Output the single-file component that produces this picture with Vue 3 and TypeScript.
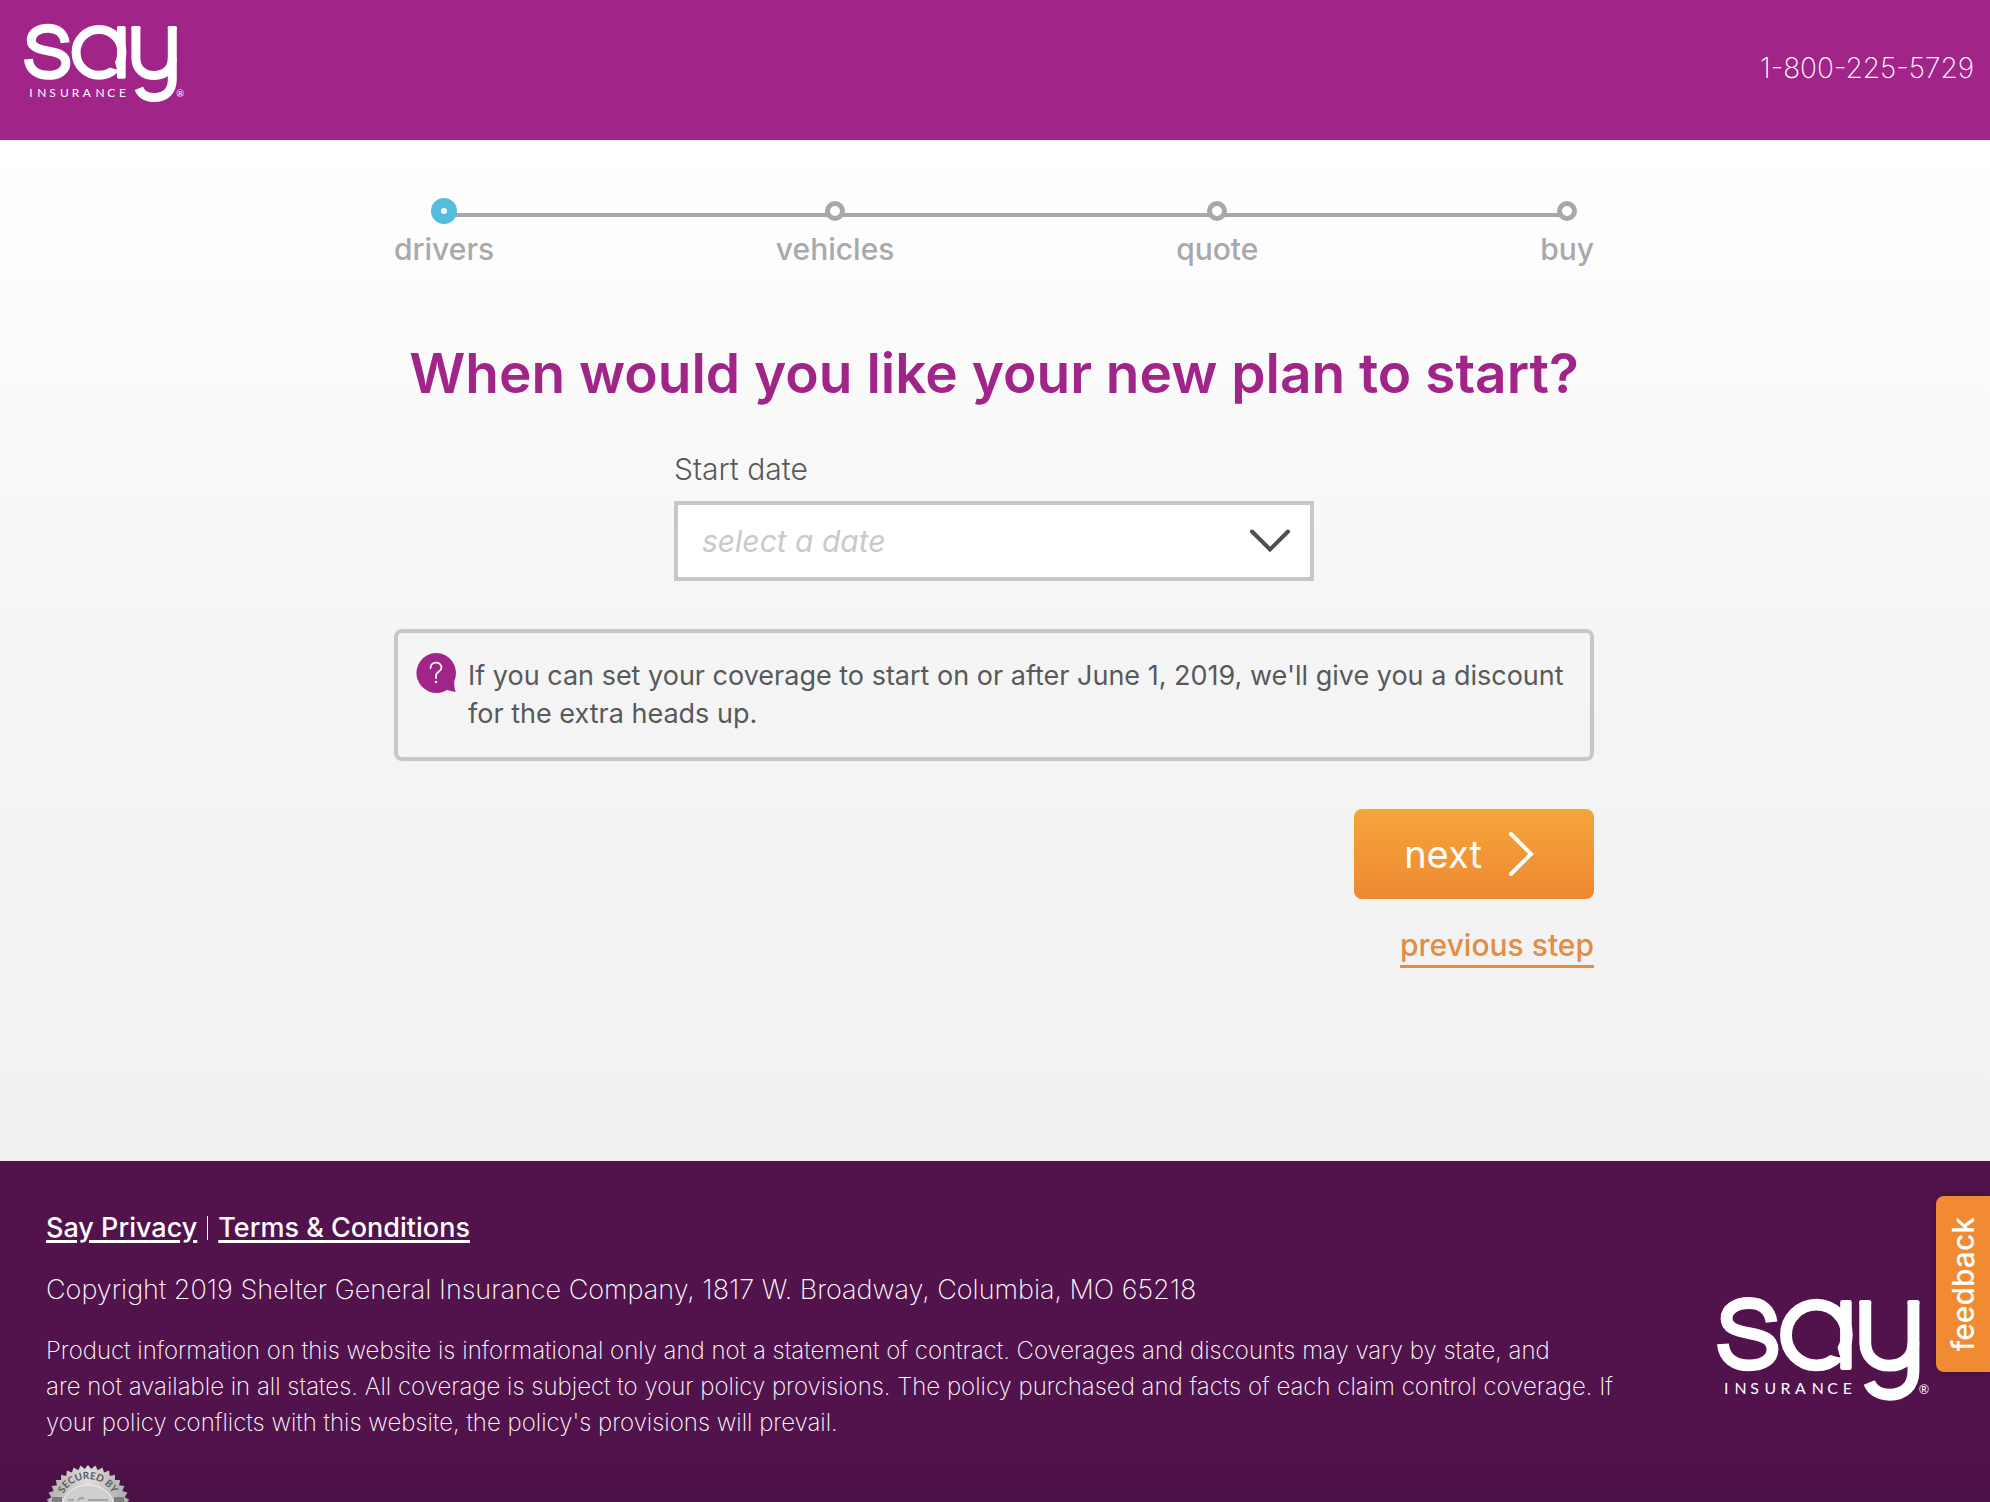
<script setup lang="ts">
import { defineComponent, h, ref } from 'vue'

const steps: string[] = ['drivers', 'vehicles', 'quote', 'buy']
const current = ref(0)
const startDate = ref('')

const insuranceX = '101 133 181 224 272 316 367 414 461'

const SayLogo = defineComponent({
  props: { ground: { type: String, required: true } },
  setup(props) {
    const stroke = { fill: 'none', stroke: '#fff', 'stroke-width': 36 }
    return () =>
      h('svg', { viewBox: '80 350 642 320', width: '100%', role: 'img', 'aria-label': 'Say Insurance', style: 'display:block' }, [
        h('path', {
          ...stroke,
          d: 'M245 429 C241 392 215 371 177 371 C138 371 109 390 109 418 C109 446 135 455 180 463 C225 471 248 483 248 512 C248 542 218 560 178 560 C134 560 101 538 98 495',
        }),
        h('circle', { ...stroke, cx: 381, cy: 468, r: 92 }),
        h('rect', { x: 453, y: 362, width: 35, height: 212, rx: 7, fill: '#fff' }),
        h('path', { d: 'M414 530 Q424 527 434 532 Q444 536 454 536 Q449 526 444 500 Z', fill: props.ground }),
        h('path', { ...stroke, d: 'M529 366 V490 C529 534 560 561 603 561 C645 561 675 534 675 490' }),
        h('path', { ...stroke, d: 'M675 366 V577 C675 624 645 649 603 649 C572 649 550 635 541 612' }),
        h('rect', { x: 511, y: 362, width: 36, height: 16, rx: 6, fill: '#fff' }),
        h('rect', { x: 657, y: 362, width: 36, height: 16, rx: 6, fill: '#fff' }),
        h('text', { x: insuranceX, y: 646, fill: '#fff', 'font-size': 48, 'font-family': 'Lato, sans-serif' }, 'INSURANCE'),
        h('text', { x: 691, y: 648, fill: '#fff', 'font-size': 38, 'font-family': 'Lato, sans-serif' }, '®'),
      ])
  },
})

const teeth = 36
const sealPoints = Array.from({ length: teeth * 2 }, (_, i) => {
  const r = i % 2 ? 38 : 42
  const a = (i * Math.PI) / teeth
  return `${(42 + r * Math.sin(a)).toFixed(1)},${(42 - r * Math.cos(a)).toFixed(1)}`
}).join(' ')
</script>

<template>
  <div class="page">
    <header class="topbar">
      <a href="#" class="logo"><SayLogo ground="#a12489" /></a>
      <a href="tel:18002255729" class="phone">1-800-225-5729</a>
    </header>

    <main class="main">
      <div class="content">
        <ol class="steps">
          <li v-for="(step, i) in steps" :key="step" class="step" :class="{ active: i === current }">
            <span class="dot-box"><span class="dot"></span></span>
            <span>{{ step }}</span>
          </li>
        </ol>

        <h1>When would you like your new plan to start?</h1>

        <div class="field">
          <label for="start-date">Start date</label>
          <div class="select-wrap">
            <select id="start-date" v-model="startDate">
              <option value="">select a date</option>
              <option value="2019-06-01">June 1, 2019</option>
            </select>
            <svg class="caret" width="42" height="24" viewBox="0 0 42 24" aria-hidden="true">
              <path d="M3 2.5 L21 20.500 L39 2.500" fill="none" stroke="#4d4e50" stroke-width="4" stroke-linecap="round" />
            </svg>
          </div>
        </div>

        <div class="tip">
          <svg width="40" height="40" viewBox="0 0 40 40" aria-hidden="true">
            <path d="M20 0 A20 20 0 0 1 38.500 27.500 Q37.500 31 39.500 39 Q34 38 31 37 A20 20 0 1 1 20 0 Z" fill="#a12489" />
            <path d="M14.500 15 C14.500 8 25.500 8 25.500 14.500 C25.500 19 20 18.500 20 22.500 V25" fill="none" stroke="#fff" stroke-width="1.800" stroke-linecap="round" />
            <circle cx="20" cy="29" r="1.300" fill="#fff" />
          </svg>
          <p>If you can set your coverage to start on or after June 1, 2019, we'll give you a discount for the extra heads up.</p>
        </div>

        <div class="actions">
          <button type="button" class="next">
            <span>next</span>
            <svg width="26" height="46" viewBox="0 0 26 46" aria-hidden="true">
              <path d="M3 3 L23 23 L3 43" fill="none" stroke="#fff" stroke-width="4" stroke-linecap="round" />
            </svg>
          </button>
          <a href="#" class="previous">previous step</a>
        </div>
      </div>
    </main>

    <footer class="footer">
      <div class="legal">
        <p class="links"><a href="#">Say Privacy</a><span class="bar"></span><a href="#">Terms &amp; Conditions</a></p>
        <p class="copyright">Copyright 2019 Shelter General Insurance Company, 1817 W. Broadway, Columbia, MO 65218</p>
        <p class="notice">
          Product information on this website is informational only and not a statement of contract. Coverages and discounts may vary by state, and<br />
          are not available in all states. All coverage is subject to your policy provisions. The policy purchased and facts of each claim control coverage. If<br />
          your policy conflicts with this website, the policy's provisions will prevail.
        </p>
        <div class="seal">
          <svg width="84" height="84" viewBox="0 0 84 84" role="img" aria-label="Secured by">
            <defs>
              <linearGradient id="metal" x1="0" x2="1" y1="0" y2="0">
                <stop offset="0" stop-color="#aeadaf" />
                <stop offset="0.5" stop-color="#dedede" />
                <stop offset="1" stop-color="#a9a8aa" />
              </linearGradient>
              <path id="arc" d="M14 42 A28 28 0 0 1 70 42" />
            </defs>
            <polygon :points="sealPoints" fill="url(#metal)" />
            <ellipse cx="42" cy="42" rx="26" ry="22" fill="#cfcfd0" stroke="#f2f2f2" stroke-width="1" />
            <rect x="6" y="32" width="10" height="16" fill="#7d7c7f" />
            <rect x="68" y="32" width="10" height="16" fill="#7d7c7f" />
            <path d="M22 35 H28 M32 36 Q34 31 38 34 M42 35 H62" fill="none" stroke="#a3a2a5" stroke-width="2" />
            <text font-size="10" font-weight="700" font-family="Lato, sans-serif" fill="#5b5a5d" text-anchor="middle">
              <textPath href="#arc" startOffset="50%">SECURED BY</textPath>
            </text>
          </svg>
        </div>
      </div>
      <div class="footer-logo"><SayLogo ground="#52134d" /></div>
    </footer>

    <button type="button" class="feedback">feedback</button>
  </div>
</template>

<style>
body {
  margin: 0;
}
</style>

<style scoped>
.page {
  position: relative;
  display: flex;
  flex-direction: column;
  min-height: 100vh;
  font-family: Inter, 'Liberation Sans', sans-serif;
  font-size: 30px;
  color: #58595b;
}
p,
h1,
ol {
  margin: 0;
  padding: 0;
}
.topbar {
  box-sizing: border-box;
  display: flex;
  justify-content: space-between;
  align-items: center;
  height: 140px;
  padding: 0 16px 0 24px;
  background: #a12489;
}
.logo {
  width: 160px;
  margin-bottom: 14px;
}
.phone {
  color: #fff;
  text-decoration: none;
  font-size: 28px;
  font-weight: 200;
  line-height: 36px;
  margin-bottom: 4px;
}
.main {
  flex: 1;
  background: linear-gradient(#fff, #f5f5f5 50%, #f1f1f1);
}
.content {
  max-width: 1200px;
  margin: 0 auto;
  padding: 55px 16px 0 14px;
}
.steps {
  position: relative;
  display: flex;
  justify-content: space-between;
  list-style: none;
  color: #a8a9ac;
  font-weight: 500;
}
.steps::before {
  content: '';
  position: absolute;
  left: 50px;
  right: 28px;
  top: 18px;
  height: 4px;
  background: #a7a8a9;
}
.step {
  position: relative;
  display: flex;
  flex-direction: column;
  align-items: center;
  line-height: 36px;
  gap: 4px;
}
.dot-box {
  display: flex;
  align-items: center;
  height: 32px;
}
.dot {
  box-sizing: border-box;
  width: 20px;
  height: 20px;
  border: 5px solid #a7a8a9;
  border-radius: 50%;
  background: #fff;
}
.active .dot {
  width: 26px;
  height: 26px;
  border: 10px solid #53bddb;
}
h1 {
  margin-top: 68px;
  text-align: center;
  color: #a12489;
  font-size: 55px;
  font-weight: 600;
  line-height: 76px;
  white-space: nowrap;
}
.field {
  max-width: 640px;
  margin: 38px auto 0;
}
.field label {
  display: block;
  font-weight: 300;
  line-height: 40px;
  margin-bottom: 12px;
}
.select-wrap {
  position: relative;
}
select {
  box-sizing: border-box;
  display: block;
  width: 100%;
  height: 80px;
  padding: 0 24px;
  border: 4px solid #c7c7c7;
  border-radius: 0;
  background: #fff;
  appearance: none;
  font: italic 400 30px Inter, 'Liberation Sans', sans-serif;
  color: #c9c9c9;
}
.caret {
  position: absolute;
  right: 23px;
  top: 28px;
  pointer-events: none;
}
.tip {
  display: flex;
  gap: 12px;
  margin-top: 48px;
  padding: 20px 12px 24px 18px;
  border: 4px solid #c7c7c7;
  border-radius: 8px;
}
.tip svg {
  flex: none;
}
.tip p {
  padding-top: 4px;
  font-size: 27px;
  font-weight: 400;
  line-height: 38px;
}
.actions {
  display: flex;
  flex-direction: column;
  align-items: flex-end;
  margin-top: 48px;
}
.next {
  display: flex;
  justify-content: center;
  align-items: center;
  gap: 26px;
  width: 240px;
  height: 90px;
  padding: 0 10px 0 0;
  border: 0;
  border-radius: 8px;
  background: linear-gradient(#f4a63b, #ef8832);
  color: #fff;
  font: 400 38px Inter, 'Liberation Sans', sans-serif;
}
.previous {
  margin: 26px 0 192px;
  border-bottom: 3px solid #e28d45;
  color: #e28d45;
  font-weight: 500;
  line-height: 40px;
  text-decoration: none;
}
.footer {
  display: flex;
  justify-content: space-between;
  padding: 47px 61px 0 46px;
  background: linear-gradient(#52134d 75%, #4b1046);
  color: #fff;
}
.links {
  display: flex;
  align-items: center;
  gap: 10px;
  font-size: 27px;
  font-weight: 300;
  line-height: 40px;
}
.links a {
  color: #fff;
  font-weight: 500;
  text-underline-offset: 3px;
  text-decoration-thickness: 3px;
}
.bar {
  width: 1px;
  height: 24px;
  background: #fff;
}
.copyright {
  margin-top: 22px;
  font-size: 27px;
  font-weight: 200;
  line-height: 40px;
}
.notice {
  margin-top: 23px;
  font-size: 24px;
  font-weight: 200;
  line-height: 36px;
  white-space: nowrap;
}
.seal {
  height: 37px;
  margin-top: 24px;
  overflow: hidden;
}
.seal svg {
  display: block;
}
.footer-logo {
  flex: none;
  width: 212px;
  padding-top: 88px;
}
.feedback {
  position: absolute;
  right: 0;
  top: 1196px;
  box-sizing: border-box;
  width: 54px;
  height: 176px;
  padding: 0;
  border: 0;
  border-radius: 8px 0 0 8px;
  background: #f08b34;
  box-shadow: 0 0 12px rgba(0, 0, 0, 0.3);
  color: #fff;
  font: 500 30px Inter, 'Liberation Sans', sans-serif;
  line-height: 54px;
  writing-mode: sideways-lr;
}
</style>
